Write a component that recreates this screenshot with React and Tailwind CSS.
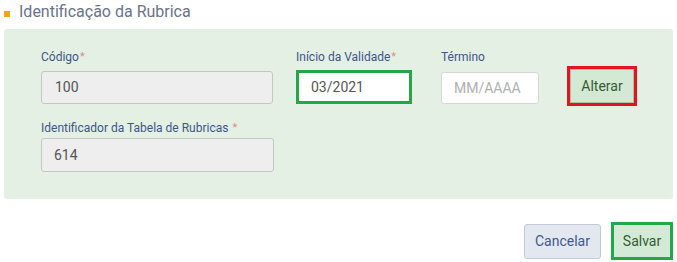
import React from 'react'

const Label = ({ children, required, spaced }) => (
  <label className="block h-[16px] text-[12px] leading-[16px] text-[#3e5589] whitespace-nowrap">
    {children}
    {required && <span className={`text-[11px] align-top text-[#e08a82] ${spaced ? 'ml-[4px]' : 'ml-[1px]'}`}>*</span>}
  </label>
)

const App = () => {
  return (
    <div className="w-[677px] h-[262px] bg-white font-['Roboto',sans-serif] overflow-hidden">
      <div className="flex items-center h-[24px] pl-[4px]">
        <span className="w-[6px] h-[6px] bg-[#f5a50b] mt-[3px]" />
        <h2 className="ml-[9px] text-[16px] leading-[24px] text-[#6b7387]">Identificação da Rubrica</h2>
      </div>

      <div className="ml-[4px] w-[669px] mt-[5px] bg-[#e5f0e4] rounded-[3px] pl-[37px] pt-[20px] pb-[27px]">
        <div className="flex items-end">
          <div className="w-[232px]">
            <Label required>Código</Label>
            <div className="mt-[6px] h-[33px] bg-[#eeeeee] border border-[#c6c6c6] rounded-[3px] px-[13px] flex items-center text-[14px] text-[#555]">
              100
            </div>
          </div>

          <div className="ml-[23px] w-[116px]">
            <Label required>Início da Validade</Label>
            <div className="mt-[5px] h-[34px] bg-white border-[3px] border-[#21a847] px-[12px] flex items-center text-[14px] text-[#555]">
              03/2021
            </div>
          </div>

          <div className="ml-[29px] w-[98px]">
            <Label>Término</Label>
            <div className="mt-[7px] h-[32px] bg-white border border-[#d8d8d8] rounded-[3px] px-[12px] flex items-center text-[14px] text-[#b0b0b0]">
              MM/AAAA
            </div>
          </div>

          <div className="ml-[28px] mb-[-2px] w-[70px] h-[40px] border-[3px] border-[#e2151f] p-0">
            <button className="w-full h-full bg-[#d3e9d4] border border-[#a9c0aa] text-[14px] text-[#355b35]">
              Alterar
            </button>
          </div>
        </div>

        <div className="mt-[16px] w-[233px]">
          <Label required spaced>Identificador da Tabela de Rubricas</Label>
          <div className="mt-[2px] h-[34px] bg-[#eeeeee] border border-[#c6c6c6] rounded-[3px] px-[12px] flex items-center text-[14px] text-[#555]">
            614
          </div>
        </div>
      </div>

      <div className="flex items-center justify-end gap-[10px] w-[673px] mt-[23px]">
        <button className="w-[77px] h-[35px] bg-[#e3e8f0] border border-[#c3cad6] rounded-[3px] text-[14px] text-[#3e5a8f]">
          Cancelar
        </button>
        <button className="w-[62px] h-[38px] bg-[#d3ebd6] border-[3px] border-[#21a847] text-[14px] text-[#355b35]">
          Salvar
        </button>
      </div>
    </div>
  )
}

export default App
